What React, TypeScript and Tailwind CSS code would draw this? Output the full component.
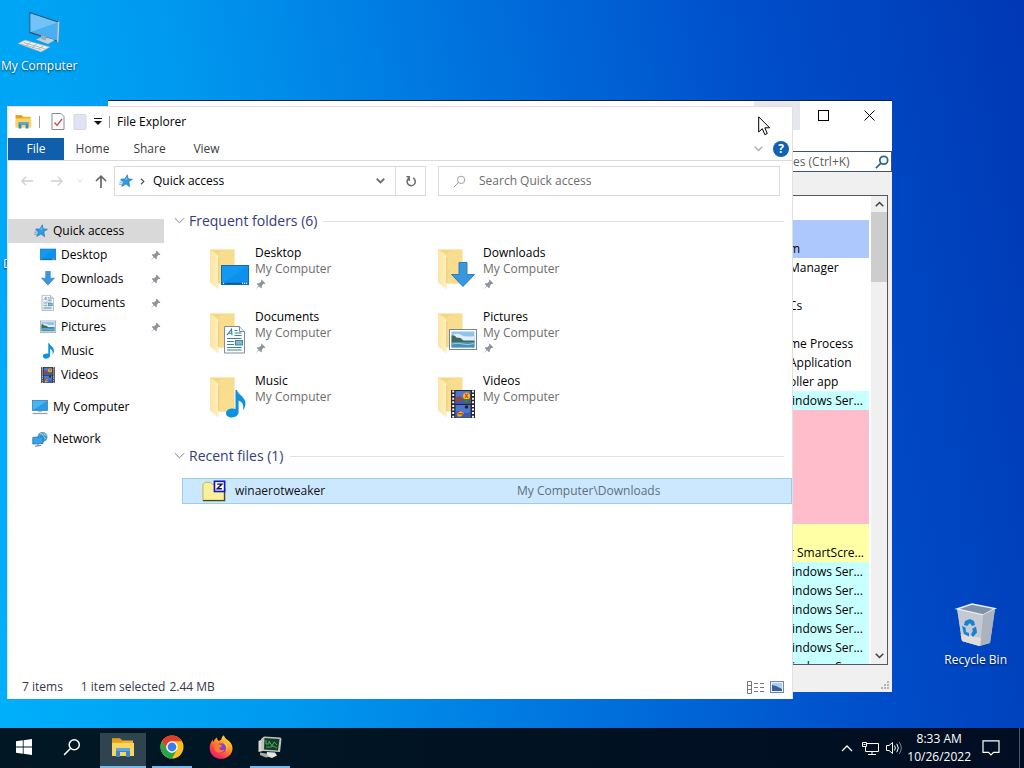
import type { ReactNode } from 'react';

interface IconProps {
  className?: string;
}

type Kind = 'desktop' | 'downloads' | 'documents' | 'pictures' | 'music' | 'videos';

interface Folder {
  name: string;
  kind: Kind;
  pinned: boolean;
}

const FOLDERS: Folder[] = [
  { name: 'Desktop', kind: 'desktop', pinned: true },
  { name: 'Downloads', kind: 'downloads', pinned: true },
  { name: 'Documents', kind: 'documents', pinned: true },
  { name: 'Pictures', kind: 'pictures', pinned: true },
  { name: 'Music', kind: 'music', pinned: false },
  { name: 'Videos', kind: 'videos', pinned: false },
];

interface ProcessRow {
  text: string;
  color: string;
}

const SERVICE: ProcessRow = { text: 'Windows Ser...', color: 'bg-[#c8ffff]' };
const STORE_APP: ProcessRow = { text: '', color: 'bg-[#ffbccb]' };

const PROCESSES: ProcessRow[] = [
  { text: '', color: 'bg-[#adc8fd]' },
  { text: 'm', color: 'bg-[#adc8fd]' },
  { text: 'Manager', color: '' },
  { text: '', color: '' },
  { text: 'Cs', color: '' },
  { text: '', color: '' },
  { text: 'me Process', color: '' },
  { text: 'Application', color: '' },
  { text: 'oller app', color: '' },
  SERVICE,
  ...Array.from({ length: 6 }, () => STORE_APP),
  { text: '', color: 'bg-[#ffffa6]' },
  { text: 'r SmartScre...', color: 'bg-[#ffffa6]' },
  ...Array.from({ length: 6 }, () => SERVICE),
];

function PinIcon({ className }: IconProps) {
  return (
    <svg viewBox="0 0 12 12" className={className} fill="#8d9399">
      <path d="M7.2.6 11.4 4.8 10.3 5.4 9.4 5.2 7.4 7.3 7.5 9.4 6.6 10.2 4.3 8 .6 11.5 3.8 7.3 1.8 5.3 2.6 4.5 4.7 4.6 6.8 2.6 6.6 1.7Z" />
    </svg>
  );
}

function StarIcon({ className }: IconProps) {
  return (
    <svg viewBox="0 0 14 14" className={className}>
      <path
        d="M8.400.8 9 4.800 13.400 5.300 9.900 7.600 10.600 12.700 7 10 2.700 12.400 4.400 8.300 1.800 5 6 5Z"
        fill="#2f9be6"
        stroke="#1f78bd"
        strokeWidth=".7"
      />
      <path d="M.4 8.2h3M0 10.2h3.2M1.4 6.4h2" stroke="#3d9adb" strokeWidth=".8" />
      <path d="M8 3 8.400 5.400 6.200 5.800Z" fill="#7cc8f7" />
    </svg>
  );
}

function DesktopGlyph() {
  return (
    <g>
      <rect x=".5" y="3.500" width="27" height="19" fill="#129af2" stroke="#0f6cb4" />
      <path d="M1 21 27 4V21Z" fill="#0788e6" opacity=".5" />
      <path d="M1 21.500h26" stroke="#0c5a9a" strokeWidth="1.400" />
      <path d="M2 21.300h1.200M21 21.300h1.200M23 21.300h1.200M25 21.300h1.200" stroke="#d9f1ff" strokeWidth="1.200" />
    </g>
  );
}

function DownloadsGlyph() {
  return (
    <path
      d="M10 .5h8v12h7.500L14 24.500 2.500 12.500H10Z"
      fill="#3a96dd"
      stroke="#2376b8"
      strokeWidth=".9"
    />
  );
}

function DocumentsGlyph() {
  return (
    <g>
      <path d="M3.500.5h15l5 5v21.500h-20Z" fill="#fdfefe" stroke="#7f8c99" />
      <path d="M18.500.500v5h5" fill="#e8eef3" stroke="#7f8c99" />
      <path
        d="M6 9.200 10.500 3.200 11 9.200M8 7.200h3M13.500 4.500h3M13.500 7h7M13.500 9.500h7M6 12.500h14.500M6 15.500h7M6 18.500h7M6 21.500h14.500M6 24h14.500"
        stroke="#3e7ea5"
        strokeWidth="1.100"
        fill="none"
      />
      <rect x="14.500" y="14.500" width="7" height="4.500" fill="#7fb7d6" stroke="#2f6d92" strokeWidth=".8" />
    </g>
  );
}

function PicturesGlyph() {
  return (
    <g>
      <rect x=".5" y="3.500" width="27" height="20" fill="#fff" stroke="#6f8797" />
      <rect x="2.500" y="5.500" width="23" height="16" fill="#8fc4ee" />
      <path d="M3 9.500q5-3 9-.5t13 1v5H3Z" fill="#dfeffb" />
      <path d="M2.500 9.500q3-1 5 2l4 .5 3 2.500h11v2h-23Z" fill="#3f6a5c" />
      <path d="M2.500 16h23v5.500h-23Z" fill="#4b8fb6" />
      <path d="M3 18q6-1.500 11 0t11-.500" stroke="#a6d3e6" strokeWidth=".9" fill="none" />
    </g>
  );
}

function MusicGlyph() {
  return (
    <path
      d="M14.500 0h1.500c.6 4.400 8.500 6.800 8.500 13.400 0 3-1.400 5.200-2.600 7 1.200-5.400-.400-8.400-4.300-9.900V22c0 3.200-3 5.400-6.800 5.400-3.400 0-5.800-1.600-5.800-4.200 0-3 3.400-5 6.800-4.800 1 0 2 .2 2.700.6Z"
      fill="#0e92e0"
    />
  );
}

function VideosGlyph() {
  return (
    <g>
      <rect x="2" y="0" width="24" height="28" fill="#26262e" />
      <rect x="6.500" y="1" width="15" height="12.500" fill="#4d76d1" />
      <rect x="6.500" y="15" width="15" height="12.500" fill="#4d76d1" />
      <path d="M6.500 8.500q3-4 6-1t9-.5v6.500h-15Z" fill="#93483b" />
      <path d="M6.500 12q7-3 15-1v2.500h-15Z" fill="#3d5bb0" />
      <path d="M6.500 23q4-4 8-1t7-1v6.500h-15Z" fill="#3d5bb0" />
      <circle cx="17.500" cy="6" r="3.500" fill="#f2c21a" />
      <path d="M16 3.500 19 8M19 3.500 16 8" stroke="#e2401f" strokeWidth="1.200" />
      <path d="m14.500 9 3 4 3-4Z" fill="#2d8a33" />
      <path d="M8 24q3-5 7-1l-3 3.500H9Z" fill="#f2b01a" />
      <path d="M9 23h5v1.500H9Z" fill="#d2452c" />
      <circle cx="17.500" cy="17" r="1.800" fill="#20262b" />
      <path d="M4.200.5v27.500M24 .5v27.500" stroke="#f4f4f4" strokeWidth="2" strokeDasharray="2 1.600" />
    </g>
  );
}

const GLYPHS: Record<Kind, () => ReactNode> = {
  desktop: DesktopGlyph,
  downloads: DownloadsGlyph,
  documents: DocumentsGlyph,
  pictures: PicturesGlyph,
  music: MusicGlyph,
  videos: VideosGlyph,
};

// The same glyph serves the sidebar (16px) and the folder overlay.
function SmallIcon({ kind }: { kind: Kind }) {
  const Glyph = GLYPHS[kind];
  return (
    <svg viewBox="0 0 28 28" className="size-4 shrink-0">
      <Glyph />
    </svg>
  );
}

function FolderIcon({ kind }: { kind: Kind }) {
  const Glyph = GLYPHS[kind];
  return (
    <svg viewBox="0 0 40 45" className="h-[45px] w-10 shrink-0">
      <defs>
        <linearGradient id={`flap-${kind}`} x1="0" x2="1" y1="0" y2="0">
          <stop offset="0" stopColor="#fbe5a2" />
          <stop offset="1" stopColor="#fff0bd" />
        </linearGradient>
        <linearGradient id={`back-${kind}`} x1="0" x2="1" y1="0" y2="1">
          <stop offset="0" stopColor="#f3d584" />
          <stop offset="1" stopColor="#f9d978" />
        </linearGradient>
      </defs>
      <path d="M1 4.500h24.500v34H9Z" fill={`url(#back-${kind})`} />
      <path d="M9.500 9q1-2.500 4-3l11.500-1.500v34H9.500Z" fill="#fbe095" opacity=".7" />
      <path d="M1 4.500 8 9q1.700 1.200 1.700 3.200v31.300Q9 44.500 7.500 43L2.200 38.500Q1 37.500 1 36Z" fill={`url(#flap-${kind})`} />
      <path d="M9.700 12v26" stroke="#e6bf62" strokeWidth=".7" />
      <g transform="translate(12 17)">
        <Glyph />
      </g>
    </svg>
  );
}

function ExplorerIcon({ className }: IconProps) {
  return (
    <svg viewBox="0 0 24 22" className={className}>
      <path d="M1 1.500h8l2 2h11V18H1Z" fill="#f0b429" />
      <path d="M1 6h22v13H1Z" fill="#fcd462" />
      <path d="M1 1.500h8l2 2v2H1Z" fill="#e2a114" />
      <path d="M5 20v-7.500q0-1.500 1.500-1.500h11q1.500 0 1.500 1.500V20h-4v-5H9v5Z" fill="#3c87c4" />
      <path d="M5 12.500q0-1.500 1.500-1.500h11q1.500 0 1.500 1.500V14H5Z" fill="#5aa7df" />
    </svg>
  );
}

function MonitorIcon() {
  return (
    <svg viewBox="0 0 16 16" className="size-4 shrink-0">
      <rect x=".5" y="1.500" width="15" height="10" fill="#45b5f5" stroke="#3a7fae" strokeWidth=".8" />
      <path d="M1 11 15 2v9Z" fill="#2b9be6" />
      <path d="M6 12h4v1.200H6Z" fill="#b9c7d1" />
      <path d="M.5 14.500h15" stroke="#8da2b1" strokeWidth="1.200" />
    </svg>
  );
}

function NetworkIcon() {
  return (
    <svg viewBox="0 0 16 16" className="size-4 shrink-0">
      <circle cx="10.500" cy="6" r="5" fill="#4c9cc9" />
      <path d="M8 2.500q3 0 3 2t2.500 3M7 5l2 2M12 1.500q-1 2 2.500 3" stroke="#9dd4ee" strokeWidth="1" fill="none" />
      <path d="M.8 6.500 11 5.500v7L.8 13Z" fill="#31a5ee" stroke="#246fa3" strokeWidth=".8" />
      <path d="M3 15.200 9 14.500M6 13v2" stroke="#5b7f99" />
    </svg>
  );
}

function Chevron({ className }: IconProps) {
  return (
    <svg viewBox="0 0 12 8" className={className} fill="none" stroke="currentColor">
      <path d="m1 1 5 5 5-5" />
    </svg>
  );
}

function Magnifier({ className }: IconProps) {
  return (
    <svg viewBox="0 0 16 16" className={className} fill="none" stroke="currentColor">
      <circle cx="10" cy="6" r="4.500" />
      <path d="M6.800 9.200 1 15" />
    </svg>
  );
}

function ArchiveIcon() {
  return (
    <svg viewBox="0 0 26 24" className="h-6 w-6 shrink-0">
      <path d="M1 5 3.500 2.500H9L11.500 5H24v17H1Z" fill="#fbf09a" stroke="#b5ae5c" />
      <path d="M1 22.500h23.500V9" stroke="#4b4a17" strokeWidth="1.400" fill="none" />
      <rect x="13.500" y="1.500" width="11" height="11" fill="#fff" stroke="#1414c8" strokeWidth="1.800" />
      <path d="M16.500 4.500h5l-5 5h5" stroke="#101050" strokeWidth="1.500" fill="none" />
    </svg>
  );
}

function ComputerIcon() {
  return (
    <svg viewBox="0 0 48 46" className="h-[46px] w-12">
      <path d="M14.500 4 44.500 14 43.500 34 14.500 25Z" fill="#3b4c5b" />
      <path d="M15.500 5.500 42.500 14.500 42 32.500 15.500 24Z" fill="#4aaef2" />
      <path d="M15.500 5.500 42.500 14.500 15.500 24Z" fill="#72c3f8" />
      <path d="M42.500 14 44.500 13.500 43.500 34.500 42 34Z" fill="#c3ccd2" />
      <path d="M21 31.500 28 28.500 40 32 33 36Z" fill="#c5d0d8" />
      <path d="M26 27v4l5 1.500v-4Z" fill="#9dabb5" />
      <path d="M3 35.500 10 32 35 39 26 44Z" fill="#eef0f1" stroke="#98a7b1" strokeWidth=".7" />
      <path d="M6 36 27 42M8.500 34.500 30 40.800M11 37.500l5-3.500M17 39.500l5-3.500M23 41l5-3" stroke="#9aa6ae" strokeWidth=".7" />
    </svg>
  );
}

function RecycleBinIcon() {
  return (
    <svg viewBox="0 0 44 48" className="h-12 w-11">
      <path d="M3 9 18 4 41 8.500 36 43 25 46 8 41Z" fill="#c3cbd4" />
      <path d="M3 9 18 4 41 8.500 29 15Z" fill="#7f92a8" stroke="#e8edf2" strokeWidth="1.400" />
      <path d="M29 15 41 9 36 43 26 46Z" fill="#aab3be" />
      <path d="M3.500 10 29 15.500 26 46 8 41Z" fill="#c3cad4" />
      <path d="M6.500 34 27 38 26 46 8 41Z" fill="#e0dedb" />
      <g fill="#1583d2">
        <path d="m11 21 5-2 4 2 1 4-3 1-2-3-3 3-3-1Z" />
        <path d="m8 26 3.500 1.500L12 32l3 1v3.500L10 34Z" />
        <path d="m22 26.500 1 6-4 4.500-2-2.500 2-4-1-1.500Z" />
      </g>
    </svg>
  );
}

function DesktopShortcut({ label, className, children }: { label: string; className: string; children?: ReactNode }) {
  return (
    <button
      type="button"
      className={`absolute flex flex-col items-center gap-1 whitespace-nowrap text-white
        [text-shadow:0_1px_2px_rgba(0,0,0,0.7)] ${className}`}
    >
      {children}
      <span className="leading-4">{label}</span>
    </button>
  );
}

function ProcessWindow() {
  return (
    <section className="absolute top-[100px] right-[132px] bottom-[76px] left-[108px] flex flex-col border-t border-[#123] bg-[#f0f0f0]">
      <div className="flex h-[50px] items-start justify-end bg-white text-black">
        <button type="button" aria-label="Minimize" className="h-[29px] w-[46px] bg-[#e6e6ef]" />
        <button type="button" aria-label="Maximize" className="flex h-7 w-[46px] items-center justify-center">
          <span className="size-[11px] border border-black" />
        </button>
        <button type="button" aria-label="Close" className="flex h-7 w-[46px] items-center justify-center">
          <svg viewBox="0 0 11 11" className="size-[11px]" stroke="#000">
            <path d="m.5.5 10 10M10.500.500l-10 10" />
          </svg>
        </button>
      </div>
      <label className="flex h-[21px] items-center self-end border border-[#3f5566] bg-white pr-[2px]">
        <input
          type="text"
          placeholder="es (Ctrl+K)"
          aria-label="Filter processes"
          className="w-[90px] pl-2 outline-none placeholder:text-[#5c5c5c]"
        />
        <Magnifier className="size-[14px] text-[#2f6590] [stroke-width:2]" />
      </label>
      <div className="mt-[23px] mr-1 flex min-h-0 flex-1 border border-[#5a5560] bg-white">
        <div className="min-w-0 flex-1 overflow-hidden pt-6 pr-[2px]">
          <table className="w-full table-fixed border-collapse">
            <tbody>
              {PROCESSES.map((row, i) => (
                <tr key={i} className={row.color}>
                  <td className="h-[19px] p-0" />
                  <td className={`h-[19px] w-[88px] p-0 leading-4 whitespace-nowrap ${row === SERVICE ? '' : 'pl-2'}`}>
                    {row.text}
                  </td>
                </tr>
              ))}
            </tbody>
          </table>
        </div>
        <div className="flex w-4 flex-col items-center bg-[#f0f0f0] text-[#404040]">
          <Chevron className="my-[5px] h-[6px] w-[9px] shrink-0 rotate-180 [stroke-width:2]" />
          <div className="h-[70px] w-full bg-[#cdcdcd]" />
          <Chevron className="mt-auto mb-[5px] h-[6px] w-[9px] shrink-0 [stroke-width:2]" />
        </div>
      </div>
      <div className="flex h-[27px] items-end justify-end p-[2px]">
        <svg viewBox="0 0 9 9" className="size-[9px]" fill="#b5b5b5">
          <path d="M6 0h2v2H6zM3 3h2v2H3zM6 3h2v2H6zM0 6h2v2H0zM3 6h2v2H3zM6 6h2v2H6z" />
        </svg>
      </div>
    </section>
  );
}

function TitleBar() {
  return (
    <header className="flex h-[31px] items-center pb-[2px] pl-[7px]">
      <ExplorerIcon className="h-4 w-[17px]" />
      <span className="mx-[7px] h-3 w-px bg-[#999]" />
      <button type="button" aria-label="Properties" className="ml-1 flex">
        <svg viewBox="0 0 14 17" className="h-[17px] w-[14px]">
          <path d="M1 .5h9l3 3v13H1Z" fill="#fff" stroke="#8b8b8b" />
          <path d="m3.500 9.500 2.500 3 5-6.500" fill="none" stroke="#d4444f" strokeWidth="1.300" />
        </svg>
      </button>
      <button type="button" aria-label="New folder" className="ml-2 flex">
        <svg viewBox="0 0 14 16" className="h-4 w-[14px]">
          <path d="M1 .5h11l1 2v12L12 15.500H1Z" fill="#dfe3f3" stroke="#d2d6e8" />
        </svg>
      </button>
      <button type="button" aria-label="Customize toolbar" className="ml-[7px] flex">
        <svg viewBox="0 0 8 7" className="h-[7px] w-2">
          <path d="M0 0h8v1H0ZM0 3h8L4 7Z" fill="#111" />
        </svg>
      </button>
      <span className="mx-[7px] h-3 w-px bg-[#999]" />
      <h1 className="text-black">File Explorer</h1>
    </header>
  );
}

function RibbonTabs() {
  return (
    <nav className="flex h-[23px] items-stretch border-b border-[#dadbdc]">
      <button type="button" className="w-14 bg-[#0f5fad] text-white">
        File
      </button>
      {['Home', 'Share', 'View'].map((tab) => (
        <button key={tab} type="button" className="w-[57px] text-[#3c3c3c]">
          {tab}
        </button>
      ))}
      <button type="button" aria-label="Expand ribbon" className="ml-auto text-[#a5a5a5]">
        <Chevron className="h-[6px] w-[9px] [stroke-width:1.6]" />
      </button>
      <button
        type="button"
        aria-label="Help"
        className="mr-[3px] ml-[10px] flex size-4 items-center justify-center self-center rounded-full bg-[#0f62b5] font-bold text-white"
      >
        ?
      </button>
    </nav>
  );
}

function AddressRow() {
  return (
    <div className="flex items-stretch py-[5px] pr-3 pl-[13px]">
      <div className="flex w-[93px] items-center">
        <button type="button" aria-label="Back">
          <svg viewBox="0 0 12 10" className="h-[10px] w-3" fill="none" stroke="#cfcfcf" strokeWidth="1.300">
            <path d="M5 .8.8 5 5 9.200M1 5h11" />
          </svg>
        </button>
        <button type="button" aria-label="Forward" className="ml-[18px]">
          <svg viewBox="0 0 12 10" className="h-[10px] w-3" fill="none" stroke="#cfcfcf" strokeWidth="1.300">
            <path d="m7 .8 4.200 4.200L7 9.200M11 5H0" />
          </svg>
        </button>
        <button type="button" aria-label="Recent locations" className="ml-[14px] text-[#d8d8d8]">
          <Chevron className="h-1 w-[6px] [stroke-width:2]" />
        </button>
        <button type="button" aria-label="Up" className="ml-3">
          <svg viewBox="0 0 12 13" className="h-[13px] w-3" fill="none" stroke="#686868" strokeWidth="1.700">
            <path d="M1 6 6 1.200 11 6M6 1.500V13" />
          </svg>
        </button>
      </div>
      <div className="flex h-[30px] flex-1 items-center border border-[#d9d9d9]">
        <StarIcon className="ml-1 size-[14px]" />
        <svg viewBox="0 0 5 8" className="ml-[7px] h-[7px] w-[5px]" fill="none" stroke="#555" strokeWidth="1.400">
          <path d="m.8.8 3.200 3.200L.8 7.200" />
        </svg>
        <span className="ml-2 flex-1 text-black">Quick access</span>
        <button type="button" aria-label="Previous locations" className="mr-[10px] text-[#707070]">
          <Chevron className="h-[6px] w-[9px] [stroke-width:2.4]" />
        </button>
        <button
          type="button"
          aria-label="Refresh"
          className="flex w-[30px] items-center justify-center self-stretch border-l border-[#d9d9d9]"
        >
          <svg viewBox="0 0 12 12" className="size-3" fill="none" stroke="#6a6a6a" strokeWidth="1.500">
            <path d="M8.200 3A4.100 4.100 0 1 1 4 3.100M4.200 6V2.500M1.500 1.800h3.400" />
          </svg>
        </button>
      </div>
      <label className="ml-3 flex h-[30px] w-[342px] items-center border border-[#d9d9d9]">
        <Magnifier className="ml-[14px] size-[13px] text-[#8a8a8a]" />
        <input
          type="search"
          placeholder="Search Quick access"
          aria-label="Search Quick access"
          className="ml-[13px] min-w-0 flex-1 outline-none placeholder:text-[#6d6d6d]"
        />
      </label>
    </div>
  );
}

function Sidebar() {
  return (
    <aside className="w-[156px] shrink-0 pt-[13px] text-black">
      <a href="#quick" className="flex h-6 items-center bg-[#d9d9d9] pl-[26px]">
        <StarIcon className="size-[14px]" />
        <span className="ml-[5px]">Quick access</span>
      </a>
      {FOLDERS.map((folder) => (
        <a key={folder.kind} href={`#${folder.kind}`} className="flex h-6 items-center pr-[3px] pl-8">
          <SmallIcon kind={folder.kind} />
          <span className="ml-[5px] flex-1">{folder.name}</span>
          {folder.pinned && <PinIcon className="size-[11px]" />}
        </a>
      ))}
      <a href="#computer" className="mt-2 flex h-6 items-center pl-6">
        <MonitorIcon />
        <span className="ml-[5px]">My Computer</span>
      </a>
      <a href="#network" className="mt-2 flex h-6 items-center pl-6">
        <NetworkIcon />
        <span className="ml-[5px]">Network</span>
      </a>
    </aside>
  );
}

function GroupHeading({ title }: { title: string }) {
  return (
    <h2 className="flex h-6 items-center pr-2 text-sm text-[#353c7a]">
      <Chevron className="mr-1 h-2 w-[11px] text-[#777]" />
      {title}
      <span className="ml-[6px] h-px flex-1 bg-[#e2e2e2]" />
    </h2>
  );
}

function FileList() {
  return (
    <main className="min-w-0 flex-1 pt-[3px] pl-[10px]">
      <GroupHeading title="Frequent folders (6)" />
      <ul className="mt-3 grid grid-cols-[228px_228px] pl-[35px]">
        {FOLDERS.map((folder) => (
          <li key={folder.kind} className="flex h-16">
            <FolderIcon kind={folder.kind} />
            <div className="ml-[6px] leading-4">
              <p className="text-black">{folder.name}</p>
              <p className="text-[#6d6d6d]">My Computer</p>
              {folder.pinned && <PinIcon className="mt-[2px] size-[11px]" />}
            </div>
          </li>
        ))}
      </ul>
      <div className="mt-[7px]">
        <GroupHeading title="Recent files (1)" />
        <div className="mt-[10px] ml-2 grid h-[26px] grid-cols-[334px_1fr] items-center border border-[#99cdee] bg-[#cce8ff]">
          <a href="#winaerotweaker" className="flex items-center pl-[19px] text-[#111]">
            <ArchiveIcon />
            <span className="ml-[9px]">winaerotweaker</span>
          </a>
          <span className="text-[#5f6f7a]">My Computer\Downloads</span>
        </div>
      </div>
    </main>
  );
}

function ExplorerWindow() {
  return (
    <section className="absolute top-[106px] right-[231px] bottom-[69px] left-[7px] flex flex-col border-t border-r border-l border-t-[#f3d9de] border-r-[#e0e0e0] border-l-[#cfe9f8] bg-white">
      <TitleBar />
      <RibbonTabs />
      <AddressRow />
      <div className="mt-[5px] flex min-h-0 flex-1">
        <Sidebar />
        <FileList />
      </div>
      <footer className="flex h-6 items-center pr-2 pl-[14px] text-[#33384d]">
        <span>7 items</span>
        <span className="ml-[18px]">1 item selected</span>
        <span className="ml-1">2.44 MB</span>
        <button type="button" aria-label="Details view" className="ml-auto">
          <svg viewBox="0 0 17 13" className="h-[13px] w-[17px]" fill="none" stroke="#777">
            <path d="M.5.5h4v12h-4ZM.5 4.500h4M.5 8.500h4M7 2.500h4M13 2.500h4M7 6.500h4M13 6.500h4M7 10.500h4M13 10.500h4" />
          </svg>
        </button>
        <button type="button" aria-label="Large icons view" className="ml-[6px]">
          <svg viewBox="0 0 14 12" className="h-3 w-[14px]">
            <rect x=".5" y=".5" width="13" height="11" fill="#e9f3fb" stroke="#75879b" />
            <rect x="2" y="2" width="10" height="8" fill="#a9cdf2" />
            <path d="m2 4 4 1 6 3v2H2Z" fill="#3c5f9c" />
          </svg>
        </button>
      </footer>
    </section>
  );
}

function ChromeIcon() {
  return (
    <svg viewBox="0 0 24 24" className="size-6">
      <circle cx="12" cy="12" r="11.500" fill="#fbc116" />
      <path d="M2.040 6.250A11.500 11.500 0 0 1 21.960 6.250H12A5.700 5.700 0 0 0 7 14.900Z" fill="#e33b2e" />
      <path d="M2.040 6.250 7 14.850A5.700 5.700 0 0 0 12 17.700L12 17.700 16.900 14.900 12 23.500A11.500 11.500 0 0 1 2.040 6.250Z" fill="#2ba24c" />
      <circle cx="12" cy="12" r="5.700" fill="#fff" />
      <circle cx="12" cy="12" r="4.400" fill="#3b7ded" />
    </svg>
  );
}

function FirefoxIcon() {
  return (
    <svg viewBox="0 0 24 24" className="size-6">
      <defs>
        <linearGradient id="fox" x1=".9" y1="0" x2=".2" y2="1">
          <stop offset="0" stopColor="#fff04a" />
          <stop offset=".4" stopColor="#ff9a1f" />
          <stop offset=".75" stopColor="#ff3d4d" />
          <stop offset="1" stopColor="#e21a78" />
        </linearGradient>
      </defs>
      <path
        d="M14.500.2c1.400 2 2 3 3 4 3.500 2 6 5 6 9 0 6-5 10.600-11.300 10.600S.7 19.500.7 13.200c0-3.600 1.300-6.400 3-8.400.2 1 .4 1.700.9 2.200C5.200 5 6.400 3.400 8 2.600c0 1.600.6 2.700 2 3.400 1.200-.8 1-1 2-1 .6-2 1.200-3.600 2.500-4.800Z"
        fill="url(#fox)"
      />
      <circle cx="12.300" cy="13" r="4.800" fill="#8a3fd6" />
      <path d="M5 10c2-2 4-1.400 5.500-.4 1.500.2 2.500.4 2.500 1.300 0 1-2 1.200-2.700 2.300.6 2.400 3.500 2.500 5.200 1.300-1 3.500-7.500 4.500-9.600.5C5 13.500 4.600 11.500 5 10Z" fill="#ff7a2d" />
      <path d="M15 7c4 2 4.500 7 2 10 1.500-3.500.500-6.500-1.500-8Z" fill="#ffd83b" />
    </svg>
  );
}

function ProcessExplorerIcon() {
  return (
    <svg viewBox="0 0 24 24" className="size-6">
      <path d="M.5 6 5 4v12l-4.500 1Z" fill="#d9dbd3" />
      <path d="M3 4 6 1.500 22.500 2.500 23.500 4 22 17 5 16 3 14Z" fill="#bfc3bb" />
      <path d="M6.500 3 21.500 4 20 15.500 6 14.500Z" fill="#173c25" />
      <path d="M8 5v4h3V6l3 5 2-4 3 3M8 12h5l2-1 4 2" stroke="#4fb466" strokeWidth=".9" fill="none" />
      <path d="M9 17 17 17.500l2 3-5 2.500-6-2Z" fill="#e6e7e2" />
      <path d="M2 17.500 8 18.500 11 22l-3 .5-6-2.500Z" fill="#a7aba4" />
    </svg>
  );
}

function TaskButton({ label, className, children }: { label: string; className: string; children: ReactNode }) {
  return (
    <button type="button" aria-label={label} className={`flex items-center justify-center border-b-2 ${className}`}>
      {children}
    </button>
  );
}

function Taskbar() {
  return (
    <footer className="absolute inset-x-0 bottom-0 flex h-10 items-stretch bg-linear-to-r from-[#011824] to-[#010d22] text-white">
      <TaskButton label="Start" className="w-12 border-transparent">
        <svg viewBox="0 0 16 16" className="size-4" fill="#fff">
          <path d="M0 2.300 6.800 1.300V7.600H0ZM7.600 1.200 16 0V7.600H7.600ZM0 8.400H6.800V14.700L0 13.700ZM7.600 8.400H16V16L7.600 14.800Z" />
        </svg>
      </TaskButton>
      <TaskButton label="Search" className="w-12 border-transparent">
        <Magnifier className="size-[18px] [stroke-width:1.3]" />
      </TaskButton>
      <TaskButton label="File Explorer" className="mx-1 mt-[5px] w-[46px] border-[#76b9ed] bg-[#2f444e] pb-1">
        <ExplorerIcon className="h-[22px] w-6" />
      </TaskButton>
      <TaskButton label="Chrome" className="mx-[2px] w-10 border-[#76b9ed]">
        <ChromeIcon />
      </TaskButton>
      <TaskButton label="Firefox" className="mr-[5px] ml-[3px] w-12 border-transparent">
        <FirefoxIcon />
      </TaskButton>
      <TaskButton label="Process Explorer" className="w-10 border-[#76b9ed]">
        <ProcessExplorerIcon />
      </TaskButton>
      <div className="ml-auto flex items-center">
        <Chevron className="h-2 w-3 rotate-180 [stroke-width:1.3]" />
        <svg viewBox="0 0 17 15" className="ml-[9px] h-[15px] w-[17px]" fill="none" stroke="#fff">
          <path d="M5 2.500h11.500v8H3.500V6M10 10.500v3M6 13.500h8M.5 1.500h4v4h-4ZM1.500 3.500h2" />
        </svg>
        <svg viewBox="0 0 17 14" className="ml-[7px] h-[14px] w-[17px]" fill="none" stroke="#fff">
          <path d="M.5 4.500h2.500L6.500 1.500v11L3 9.500H.5ZM8.500 4.500q1.800 2.500 0 5M10.800 2.800q3 4.200 0 8.400" />
          <path d="M13.200 1q4.200 6 0 12" stroke="#777f8a" />
        </svg>
        <time className="ml-1 text-center leading-[18px]">
          8:33 AM
          <br />
          10/26/2022
        </time>
        <button type="button" aria-label="Notifications" className="ml-[11px]">
          <svg viewBox="0 0 18 16" className="h-4 w-[18px]" fill="none" stroke="#fff" strokeWidth="1.200">
            <path d="M1 .8h16v11.500h-5.500L9 14.800 6.500 12.300H1Z" />
          </svg>
        </button>
        <span className="mr-[4px] ml-[19px] h-10 w-px bg-[#4d5666]" />
      </div>
    </footer>
  );
}

export default function App() {
  return (
    <div className="relative h-screen overflow-hidden bg-linear-[80deg,#00b0fb_0%,#009af0_25%,#0074de_50%,#004fcb_75%,#0038b4_100%] font-['Open_Sans','Noto_Sans',sans-serif] text-xs text-black select-none">
      <DesktopShortcut label="My Computer" className="top-2 left-[1px]">
        <ComputerIcon />
      </DesktopShortcut>
      <DesktopShortcut label="D" className="top-[256px] left-[3px]" />
      <DesktopShortcut label="Recycle Bin" className="right-[17px] bottom-[100px]">
        <RecycleBinIcon />
      </DesktopShortcut>
      <ProcessWindow />
      <ExplorerWindow />
      <svg viewBox="0 0 13 20" className="absolute top-[116px] right-[253px] h-5 w-[13px]">
        <path d="M.7.8v15.200L4.300 12.700 6.800 18.600 9.300 17.500 6.800 11.800H11.600Z" fill="#fff" stroke="#000" />
      </svg>
      <Taskbar />
    </div>
  );
}
